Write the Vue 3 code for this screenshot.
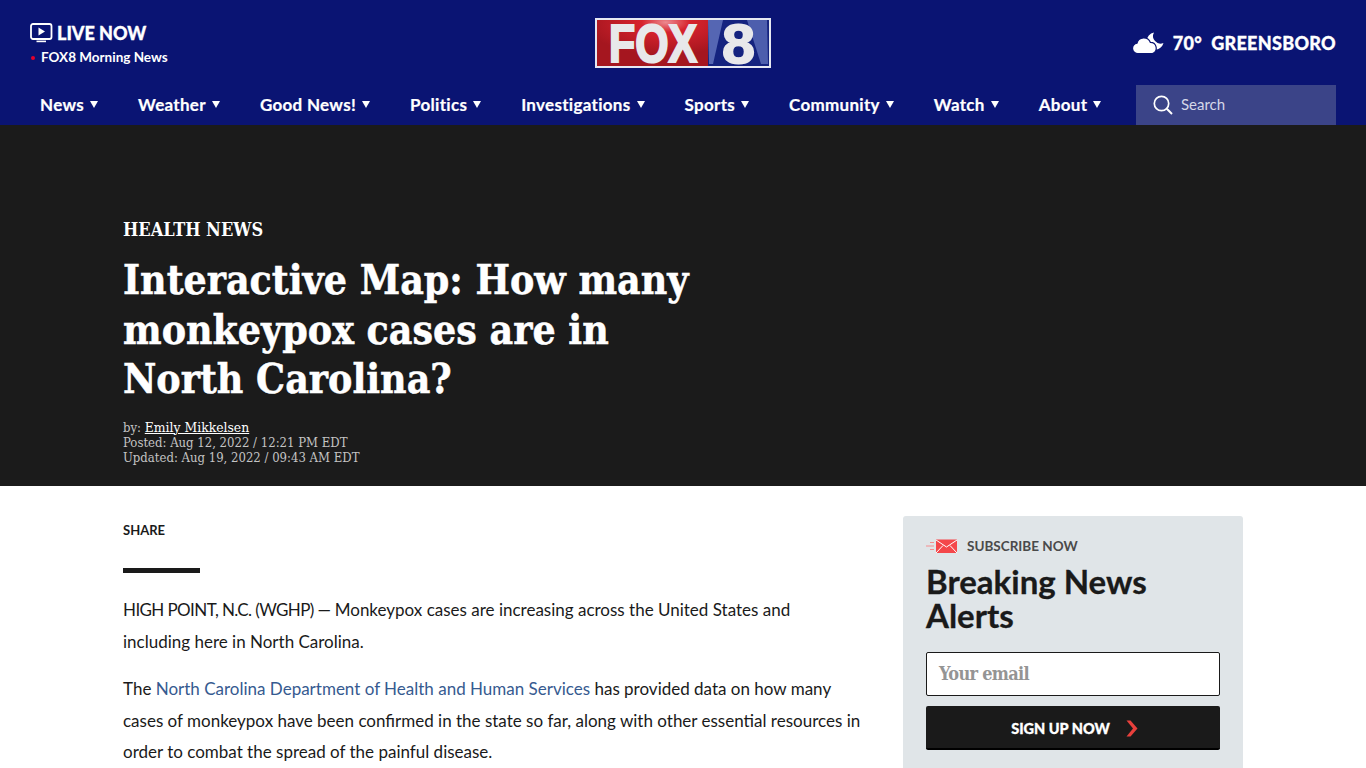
<script setup>
const navItems = ['News', 'Weather', 'Good News!', 'Politics', 'Investigations', 'Sports', 'Community', 'Watch', 'About']
</script>

<template>
  <div class="page">
    <header class="site-header">
      <div class="top-row">
        <div class="live">
          <div class="live-title">
            <svg class="live-icon" width="23" height="20" viewBox="0 0 23 20">
              <rect x="1" y="1" width="20.5" height="15" rx="2" fill="none" stroke="#fff" stroke-width="1.8" />
              <path d="M8.5 4.5 L15 8.5 L8.5 12.5 Z" fill="#fff" />
              <rect x="6.5" y="17.6" width="9.5" height="1.6" fill="#fff" />
            </svg>
            <span>LIVE NOW</span>
          </div>
          <div class="live-show"><i class="red-dot"></i>FOX8 Morning News</div>
        </div>
        <div class="logo">
          <svg width="176" height="50" viewBox="0 0 176 50">
            <defs>
              <radialGradient id="redGrad" cx="0.62" cy="0.05" r="0.72">
                <stop offset="0" stop-color="#ec8a90" />
                <stop offset="0.3" stop-color="#d7232d" />
                <stop offset="1" stop-color="#a5161f" />
              </radialGradient>
            </defs>
            <rect x="0" y="0" width="176" height="50" fill="#e6e8f2" />
            <rect x="2" y="2" width="111" height="46" fill="url(#redGrad)" />
            <rect x="113" y="2" width="61" height="46" fill="#15237f" />
            <path d="M113 2 L128 2 L118 46 L114 46 Z" fill="#6577c0" opacity="0.8" />
            <path d="M152 2 L172 2 L173 46 L166 46 Z" fill="#6577c0" opacity="0.7" />
            <text x="14" y="44" textLength="88" lengthAdjust="spacingAndGlyphs" class="logo-fox">FOX</text>
            <text x="127" y="45" textLength="33" lengthAdjust="spacingAndGlyphs" class="logo-eight">8</text>
          </svg>
        </div>
        <div class="weather">
          <svg width="31" height="22" viewBox="0 0 31 22">
            <path d="M21 0.5 A8.5 8.5 0 1 0 30.5 11 A7.5 7.5 0 0 1 21 0.5 Z" fill="#fff" />
            <path d="M5.5 21.5 A5.2 5.2 0 0 1 4 11.2 A7 7 0 0 1 17.3 10.3 A5.8 5.8 0 0 1 19.5 21.5 Z" fill="#fff" stroke="#0a1473" stroke-width="1.2" />
          </svg>
          <span class="temp">70°</span>
          <span class="city">GREENSBORO</span>
        </div>
      </div>
      <nav class="main-nav">
        <ul class="nav-list">
          <li v-for="item in navItems" :key="item" class="nav-item">
            {{ item }}<i class="caret"></i>
          </li>
        </ul>
        <div class="search">
          <svg width="22" height="22" viewBox="0 0 22 22">
            <circle cx="9.5" cy="9.5" r="7.2" fill="none" stroke="#fff" stroke-width="1.7" />
            <path d="M14.8 14.8 L20 20" stroke="#fff" stroke-width="2" />
          </svg>
          <span>Search</span>
        </div>
      </nav>
    </header>

    <section class="hero">
      <div class="kicker">HEALTH NEWS</div>
      <h1>Interactive Map: How many monkeypox cases are in North Carolina?</h1>
      <div class="meta">
        <div>by: <a class="author">Emily Mikkelsen</a></div>
        <div>Posted: Aug 12, 2022 / 12:21 PM EDT</div>
        <div>Updated: Aug 19, 2022 / 09:43 AM EDT</div>
      </div>
    </section>

    <div class="content">
      <main class="article">
        <div class="share">SHARE</div>
        <div class="rule"></div>
        <p><span class="dateline">HIGH POINT, N.C. (WGHP) —</span> Monkeypox cases are increasing across the United States and including here in North Carolina.</p>
        <p>The <a class="link">North Carolina Department of Health and Human Services</a> has provided data on how many cases of monkeypox have been confirmed in the state so far, along with other essential resources in order to combat the spread of the painful disease.</p>
      </main>
      <aside class="signup">
        <div class="subscribe">
          <svg width="32" height="14" viewBox="0 0 32 14">
            <rect x="10" y="0.5" width="21" height="13.5" fill="#f4474a" />
            <path d="M10 1 L20.5 8 L31 1 M10 14 L17 6.5 M31 14 L24 6.5" fill="none" stroke="#fff" stroke-width="1" />
            <path d="M4 3.5 H8 M0 7 H8 M4 10.5 H8" stroke="#f58d8f" stroke-width="1.2" />
          </svg>
          <span>SUBSCRIBE NOW</span>
        </div>
        <h2>Breaking News Alerts</h2>
        <div class="email"><span>Your email</span></div>
        <div class="button">
          <span>SIGN UP NOW</span>
          <svg width="13" height="17" viewBox="0 0 13 17">
            <path d="M1.5 0.5 L5.5 0.5 L12.5 8.5 L5.5 16.5 L1.5 16.5 L8 8.5 Z" fill="#e8403c" />
          </svg>
        </div>
      </aside>
    </div>
  </div>
</template>

<style scoped>
.page {
  height: 768px;
  overflow: hidden;
  background: #fff;
  color: #1a1a1a;
  font-family: Lato, "Open Sans", sans-serif;
}

/* header */
.site-header {
  height: 125px;
  background: #0a1473;
  color: #fff;
  box-sizing: border-box;
}
.top-row {
  height: 85px;
  padding: 18px 30px 0;
  box-sizing: border-box;
  display: grid;
  grid-template-columns: 1fr 176px 1fr;
  align-items: start;
}
.live-title {
  display: flex;
  align-items: center;
  gap: 4px;
  height: 29px;
  font-size: 18px;
  font-weight: 900;
  -webkit-text-stroke: 0.3px #fff;
}
.live-show {
  display: flex;
  align-items: center;
  font-size: 13.5px;
  font-weight: 700;
  line-height: 18px;
  margin-top: 1px;
}
.red-dot {
  width: 4px;
  height: 4px;
  margin: 1px 6px 0 1px;
  border-radius: 50%;
  background: #e4002b;
}
.logo {
  height: 50px;
}
.logo svg {
  display: block;
  overflow: visible;
}
.logo-fox {
  font-family: "Liberation Sans", sans-serif;
  font-weight: 700;
  font-size: 53px;
  fill: #e8e8ea;
  stroke: #e8e8ea;
  stroke-width: 2.2px;
}
.logo-eight {
  font-family: "Liberation Sans", sans-serif;
  font-weight: 700;
  font-size: 56px;
  fill: #e8e8ea;
  stroke: #e8e8ea;
  stroke-width: 1.8px;
}
.weather {
  justify-self: end;
  display: flex;
  align-items: center;
  height: 50px;
  font-weight: 900;
  font-size: 18px;
  letter-spacing: 0.3px;
  -webkit-text-stroke: 0.3px #fff;
}
.temp {
  margin-left: 9px;
}
.city {
  margin-left: 9px;
}
.main-nav {
  display: flex;
  justify-content: space-between;
  padding: 0 30px 0 40px;
  height: 40px;
}
.nav-list {
  list-style: none;
  margin: -2px 0 0;
  padding: 0;
  display: flex;
  gap: 40px;
}
.nav-item {
  display: flex;
  align-items: center;
  font-size: 17px;
  font-weight: 700;
  letter-spacing: 0.3px;
  -webkit-text-stroke: 0.2px #fff;
}
.caret {
  width: 0;
  height: 0;
  margin: 1px 0 0 6px;
  border-left: 4px solid transparent;
  border-right: 4px solid transparent;
  border-top: 7px solid #fff;
}
.search {
  width: 200px;
  box-sizing: border-box;
  padding-left: 16px;
  display: flex;
  align-items: center;
  gap: 7px;
  background: #3b4488;
  color: #d5d8e8;
  font-size: 15px;
}
.search span {
  margin-top: -2px;
}

/* hero */
.hero {
  height: 361px;
  box-sizing: border-box;
  padding: 93px 123px 0;
  background: #1b1b1b;
  color: #fff;
  font-family: "DejaVu Serif Condensed", "DejaVu Serif", serif;
  font-stretch: condensed;
}
.kicker {
  font-size: 18px;
  font-weight: 700;
  line-height: 24px;
}
h1 {
  width: 600px;
  margin: 14px 0 0;
  font-size: 40.6px;
  line-height: 49.5px;
  font-weight: 700;
  -webkit-text-stroke: 0.5px #fff;
}
.meta {
  margin-top: 15px;
  font-size: 13px;
  line-height: 15px;
  color: #c4c4c4;
}
.author {
  color: #fff;
  font-size: 13.8px;
  text-decoration: underline;
}

/* body */
.content {
  display: flex;
  padding: 30px 123px 0;
  gap: 42px;
}
.article {
  width: 738px;
  flex: none;
  padding-top: 6px;
}
.share {
  font-size: 13px;
  font-weight: 700;
  line-height: 16px;
}
.rule {
  width: 77px;
  height: 5px;
  margin-top: 30px;
  background: #1a1a1a;
}
.article p {
  margin: 0 0 16px;
  font-size: 17px;
  line-height: 31.6px;
}
.article .rule + p {
  margin-top: 21px;
}
.dateline {
  letter-spacing: -0.6px;
}
.link {
  color: #365a90;
}
.signup {
  width: 340px;
  height: 300px;
  flex: none;
  box-sizing: border-box;
  padding: 21px 23px;
  background: #e0e5e8;
  border-radius: 3px;
}
.subscribe {
  display: flex;
  align-items: center;
  gap: 9px;
  height: 18px;
  color: #4a4a4a;
  font-size: 13.5px;
  font-weight: 700;
}
h2 {
  margin: 9px 0 0;
  font-size: 33px;
  line-height: 34px;
  font-weight: 700;
  -webkit-text-stroke: 0.3px #1a1a1a;
}
.email {
  height: 44px;
  margin-top: 20px;
  box-sizing: border-box;
  padding: 0 0 2px 12px;
  display: flex;
  align-items: center;
  background: #fff;
  border: 1px solid #1a1a1a;
  border-radius: 2px;
  color: #949494;
  font-family: "DejaVu Serif Condensed", "DejaVu Serif", serif;
  font-stretch: condensed;
  font-size: 18px;
  font-weight: 700;
  letter-spacing: -0.7px;
}
.button {
  height: 44px;
  margin-top: 10px;
  box-sizing: border-box;
  border-bottom: 2px solid #000;
  display: flex;
  align-items: center;
  justify-content: center;
  gap: 15px;
  padding: 2px 0 0 3px;
  background: #1a1a1a;
  border-radius: 2px;
  color: #fff;
  font-size: 14.5px;
  font-weight: 900;
  -webkit-text-stroke: 0.3px #fff;
}
</style>

<style>
body {
  margin: 0;
}
</style>
